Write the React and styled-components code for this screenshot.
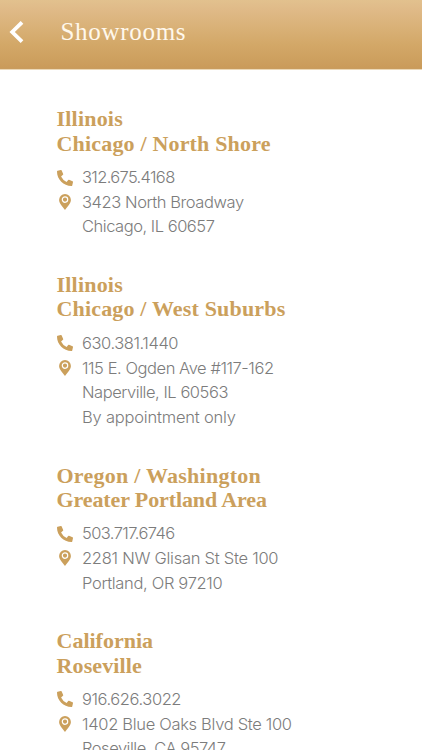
import React from "react";
import styled, { createGlobalStyle } from "styled-components";
import { FaPhoneAlt } from "react-icons/fa";

const GlobalStyle = createGlobalStyle`
  body {
    margin: 0;
    background: #fff;
    overflow: hidden;
  }
`;

const Screen = styled.div`
  height: 750px;
  overflow: hidden;
  background: #fff;
`;

const Header = styled.header`
  display: flex;
  align-items: center;
  height: 69px;
  box-sizing: border-box;
  padding: 0 0 5px 9px;
  background: linear-gradient(#e2c18e 0%, #e0bb89 12%, #d3a868 65%, #ca9b5a 100%);
  border-bottom: 1px solid #c99c5e;
  box-shadow: 0 1px 0 #ecd9b8;
`;

const BackButton = styled.button`
  display: flex;
  width: 51.5px;
  padding: 0;
  border: 0;
  background: none;
`;

const Title = styled.h1`
  margin: 0;
  font: 400 25px/30px "Liberation Serif", serif;
  letter-spacing: ${props => props.$spacing}px;
  color: #fff8ec;
`;

const List = styled.main`
  display: flex;
  flex-direction: column;
  gap: 34.1px;
  padding: 38.4px 0 0 56.5px;
`;

const Location = styled.section`
  display: flex;
  flex-direction: column;
`;

const Heading = styled.h2`
  margin: 0 0 9.3px;
`;

const HeadingLine = styled.span`
  display: block;
  font: 700 22px/24.3px "Liberation Serif", serif;
  letter-spacing: ${props => props.$spacing}px;
  color: #cba05c;
  white-space: nowrap;
`;

const Row = styled.div`
  display: grid;
  grid-template-columns: 16px 1fr;
  column-gap: 9.5px;
`;

const IconCell = styled.span`
  display: flex;
  align-items: center;
  justify-content: center;
  height: 24.6px;
  color: #cba05c;
`;

const Line = styled.span`
  display: block;
  font: 300 16.5px/24.6px Inter, sans-serif;
  letter-spacing: ${props => props.$spacing}px;
  color: #7c7c7c;
  white-space: nowrap;
`;

const BackIcon = () => (
  <svg width="15" height="22" viewBox="0 0 15 22">
    <path d="M13 1.4L3.2 11l9.8 9.6" fill="none" stroke="#fff" strokeWidth="3.8" />
  </svg>
);

const PinIcon = () => (
  <svg width="12" height="16" viewBox="0 0 12 16">
    <path
      d="M6 0a5.9 5.9 0 0 0-5.9 5.9C.1 9.3 3.6 12.4 6 16c2.4-3.6 5.9-6.7 5.9-10.1A5.9 5.9 0 0 0 6 0z"
      fill="currentColor"
    />
    <circle cx="6" cy="5.6" r="2.7" fill="none" stroke="#fff" strokeWidth="1.2" />
  </svg>
);

// every text is stored as [text, letter spacing]
const showrooms = [
  {
    heading: [["Illinois", 0.2], ["Chicago / North Shore", 0.18]],
    phone: ["312.675.4168", -0.66],
    address: [["3423 North Broadway", -0.42], ["Chicago, IL 60657", -0.47]]
  },
  {
    heading: [["Illinois", 0.2], ["Chicago / West Suburbs", 0.17]],
    phone: ["630.381.1440", -0.42],
    address: [
      ["115 E. Ogden Ave #117-162", -0.44],
      ["Naperville, IL 60563", -0.45],
      ["By appointment only", -0.2]
    ]
  },
  {
    heading: [["Oregon / Washington", 0.25], ["Greater Portland Area", -0.11]],
    phone: ["503.717.6746", -0.58],
    address: [["2281 NW Glisan St Ste 100", -0.26], ["Portland, OR 97210", -0.33]]
  },
  {
    heading: [["California", 0], ["Roseville", 0.13]],
    phone: ["916.626.3022", -0.42],
    address: [["1402 Blue Oaks Blvd Ste 100", -0.31], ["Roseville, CA 95747", -0.47]]
  }
];

const Showroom = ({ heading, phone, address }) => {
  return (
    <Location>
      <Heading>
        {heading.map(([text, spacing]) => (
          <HeadingLine key={text} $spacing={spacing}>{text}</HeadingLine>
        ))}
      </Heading>
      <Row>
        <IconCell>
          <FaPhoneAlt size={16} />
        </IconCell>
        <Line $spacing={phone[1]}>{phone[0]}</Line>
      </Row>
      <Row>
        <IconCell>
          <PinIcon />
        </IconCell>
        <div>
          {address.map(([text, spacing]) => (
            <Line key={text} $spacing={spacing}>{text}</Line>
          ))}
        </div>
      </Row>
    </Location>
  );
};

const App = () => {
  return (
    <Screen>
      <GlobalStyle />
      <Header>
        <BackButton aria-label="Back">
          <BackIcon />
        </BackButton>
        <Title $spacing={0.7}>Showrooms</Title>
      </Header>
      <List>
        {showrooms.map(showroom => (
          <Showroom key={showroom.phone[0]} {...showroom} />
        ))}
      </List>
    </Screen>
  );
};

export default App;
